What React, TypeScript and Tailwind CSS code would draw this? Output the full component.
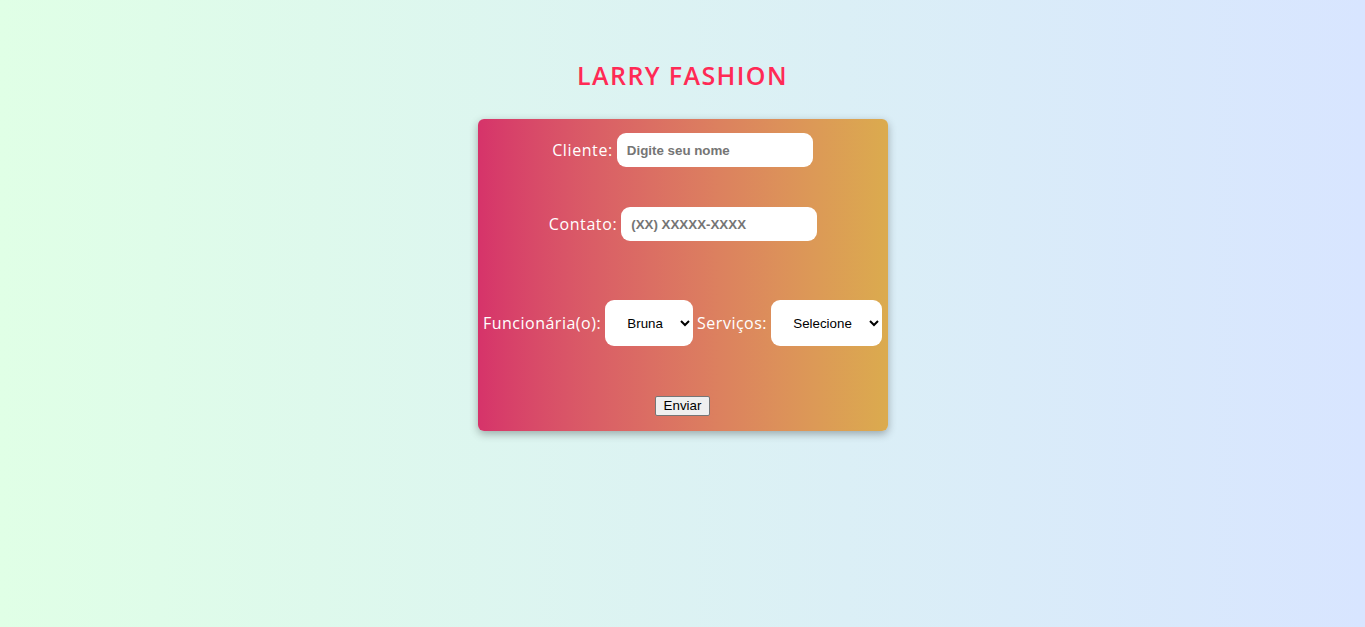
import React, { useState } from "react";

const App = () => {
  const [nome, setNome] = useState("");
  const [contato, setContato] = useState("");
  const [func, setFunc] = useState("Bruna");
  const [servico, setServico] = useState("Selecione");

  return (
    <div className="min-h-[627px] w-full bg-gradient-to-r from-[#e0ffe6] to-[#d8e5ff] flex flex-col items-center font-['Open_Sans',sans-serif]">
      <h1 className="mt-[58px] text-[25px] leading-[34px] tracking-[1.4px] font-semibold text-[#ff2a55]">
        LARRY FASHION
      </h1>

      <form
        onSubmit={(e) => e.preventDefault()}
        className="mt-[27px] w-[410px] rounded-md bg-gradient-to-r from-[#d6336a] to-[#dbab4e] shadow-[0_3px_8px_rgba(0,0,0,0.3)] flex flex-col items-center pt-[14px] pb-[15px]"
      >
        {/* cliente */}
        <div className="flex items-center gap-1">
          <label className="text-white text-[16px] tracking-[0.6px]">Cliente:</label>
          <input
            value={nome}
            onChange={(e) => setNome(e.target.value)}
            placeholder="Digite seu nome"
            className="w-[196px] h-[34px] rounded-[9px] bg-white px-[10px] text-[13.33px] font-bold text-[#555] placeholder:text-[#757575] font-['Liberation_Sans',sans-serif] outline-none"
          />
        </div>

        {/* contato */}
        <div className="flex items-center gap-1 mt-[40px] ml-[1px]">
          <label className="text-white text-[16px] tracking-[0.6px]">Contato:</label>
          <input
            value={contato}
            onChange={(e) => setContato(e.target.value)}
            placeholder="(XX) XXXXX-XXXX"
            className="w-[196px] h-[34px] rounded-[9px] bg-white px-[10px] text-[13.33px] font-bold text-[#555] placeholder:text-[#757575] font-['Liberation_Sans',sans-serif] outline-none"
          />
        </div>

        {/* funcionaria + servicos */}
        <div className="flex items-center gap-1 mt-[59px]">
          <label className="text-white text-[16px] tracking-[0.5px]">Funcionária(o):</label>
          <select
            value={func}
            onChange={(e) => setFunc(e.target.value)}
            className="w-[88px] h-[46px] rounded-[9px] bg-white text-black text-[13.33px] font-['Liberation_Sans',sans-serif] text-center pl-1 outline-none"
          >
            <option>Bruna</option>
            <option>Carla</option>
            <option>Larry</option>
          </select>
          <label className="text-white text-[16px] tracking-[0.5px]">Serviços:</label>
          <select
            value={servico}
            onChange={(e) => setServico(e.target.value)}
            className="w-[111px] h-[46px] rounded-[9px] bg-white text-black text-[13.33px] font-['Liberation_Sans',sans-serif] text-center pl-1 outline-none"
          >
            <option>Selecione</option>
            <option>Corte</option>
            <option>Escova</option>
            <option>Manicure</option>
          </select>
        </div>

        <button
          type="submit"
          className="mt-[50px] h-[20px] px-[8px] bg-[#efefef] border border-[#767676] rounded-[2px] text-[13.33px] leading-none text-black font-['Liberation_Sans',sans-serif]"
        >
          Enviar
        </button>
      </form>
    </div>
  );
};

export default App;
